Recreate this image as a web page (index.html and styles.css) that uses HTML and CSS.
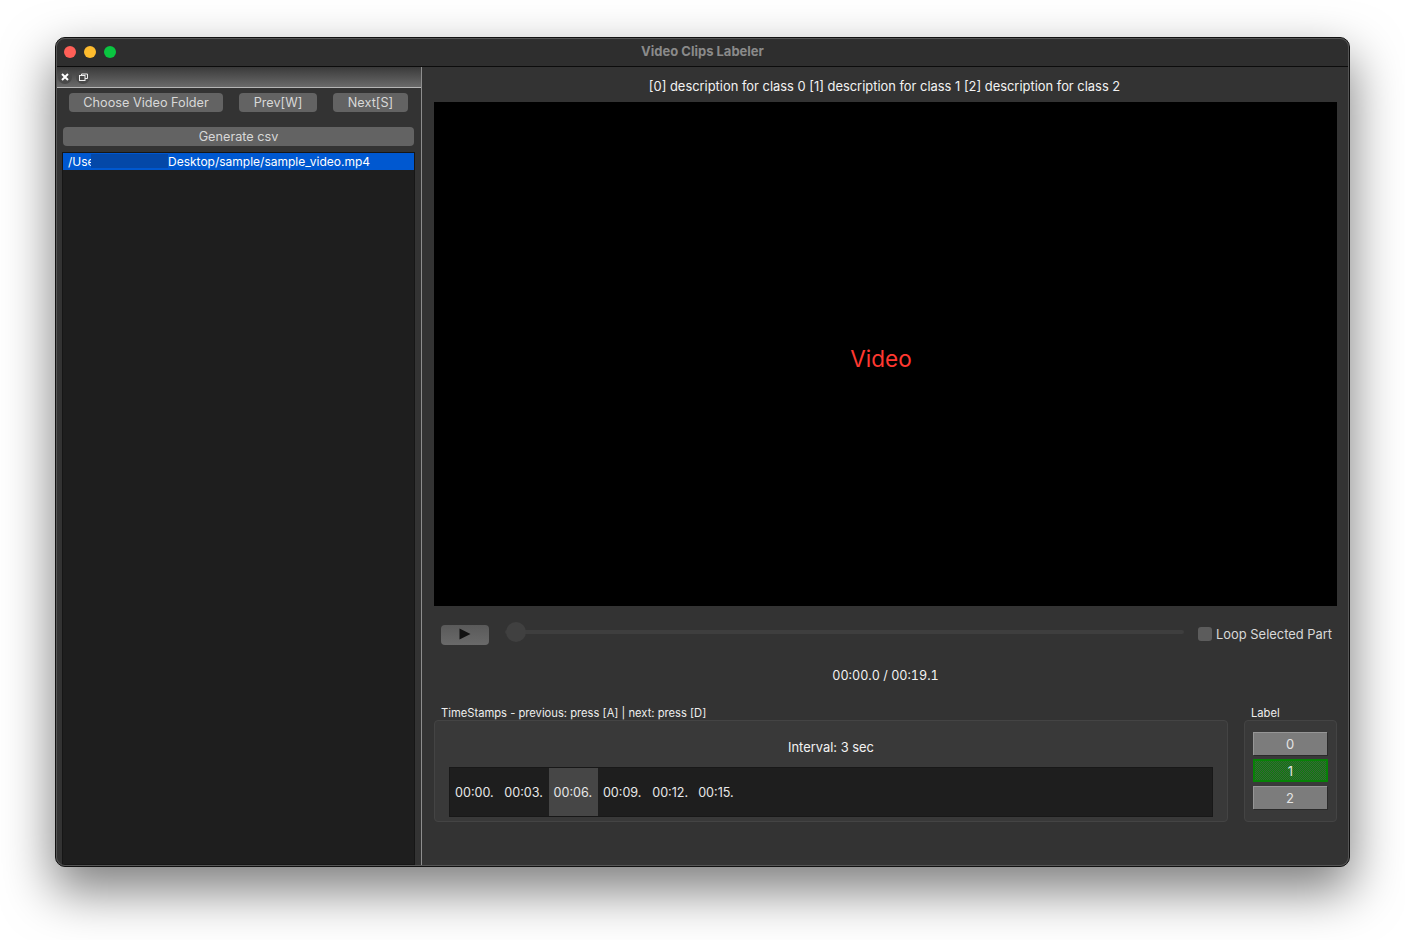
FILE: index.html
```html
<!DOCTYPE html>
<html>
<head>
  <meta charset="UTF-8">
  <title>Video Clips Labeler</title>
  <link rel="stylesheet" href="styles.css">
</head>
<body>
  <div class="window">
    <div class="titlebar">
      <div class="lights">
        <span class="light red"></span>
        <span class="light yellow"></span>
        <span class="light green"></span>
      </div>
      <span class="title">Video Clips Labeler</span>
    </div>
    <div class="content">
      <div class="dock">
        <div class="dock-title">
          <span class="dock-btn">
            <svg width="8" height="8" viewBox="0 0 8 8"><path d="M1 1l6 6M7 1l-6 6" stroke="#fff" stroke-width="2"/></svg>
          </span>
          <span class="dock-btn">
            <svg width="9" height="9" viewBox="0 0 9 9" fill="none" stroke="#eee"><rect x="0.5" y="2.5" width="5.5" height="5"/><path d="M2.5 2.5v-1.5h6v4.5h-2.5"/></svg>
          </span>
        </div>
        <div class="dock-body">
          <div class="nav-row">
            <button class="btn folder">Choose Video Folder</button>
            <button class="btn prev">Prev[W]</button>
            <button class="btn next">Next[S]</button>
          </div>
          <button class="btn csv">Generate csv</button>
          <div class="file-list">
            <div class="file-item selected">
              <span class="path-start">/Use</span>
              <span class="redacted"></span>
              <span>Desktop/sample/sample_video.mp4</span>
            </div>
          </div>
        </div>
      </div>
      <div class="main">
        <div class="description">[0] description for class 0 [1] description for class 1 [2] description for class 2</div>
        <div class="video">Video</div>
        <div class="controls">
          <button class="play">
            <svg width="12" height="12" viewBox="0 0 12 12"><path d="M0.5 0.5L11.5 6L0.5 11.5z" fill="#111"/></svg>
          </button>
          <div class="slider"><span class="handle"></span></div>
          <label class="loop"><span class="checkbox"></span>Loop Selected Part</label>
        </div>
        <div class="time">00:00.0 / 00:19.1</div>
        <div class="groups">
          <div class="group-wrap stamps">
            <div class="group-title">TimeStamps - previous: press [A] | next: press [D]</div>
            <div class="group stamps-box">
              <div class="interval">Interval: 3 sec</div>
              <div class="stamp-list">
                <span class="stamp">00:00.</span>
                <span class="stamp">00:03.</span>
                <span class="stamp current">00:06.</span>
                <span class="stamp">00:09.</span>
                <span class="stamp short">00:12.</span>
                <span class="stamp">00:15.</span>
              </div>
            </div>
          </div>
          <div class="group-wrap labels">
            <div class="group-title">Label</div>
            <div class="group labels-box">
              <button class="label-btn">0</button>
              <button class="label-btn active">1</button>
              <button class="label-btn">2</button>
            </div>
          </div>
        </div>
      </div>
    </div>
  </div>
</body>
</html>
```

FILE: styles.css
```css
html, body {
  height: 100%;
}

body {
  margin: 0;
  padding: 37px 55px 0;
  box-sizing: border-box;
  background-color: #fff;
  font-family: 'Inter', 'Liberation Sans', sans-serif;
  font-size: 12.9px;
  color: #e8e8e8;
  overflow: hidden;
}

button {
  font-family: inherit;
  border: 0;
  padding: 0;
}

.window {
  width: 1295px;
  height: 830px;
  box-sizing: border-box;
  display: flex;
  flex-direction: column;
  position: relative;
  background-color: #333;
  border: 1px solid #111;
  border-radius: 10px;
  box-shadow: 0 22px 50px 2px rgba(0, 0, 0, 0.5);
}

/* light inner edge of the window frame, lies over the content */
.window::after {
  content: '';
  position: absolute;
  inset: 0;
  border-radius: 9px;
  box-shadow: inset 0 0 0 1px #555;
  pointer-events: none;
}

.titlebar {
  height: 26px;
  padding-bottom: 2px;
  flex-shrink: 0;
  display: flex;
  align-items: center;
  justify-content: center;
  position: relative;
  background-color: #2e2e2e;
  border-bottom: 1px solid #0c0c0c;
  border-radius: 9px 9px 0 0;
}

.title {
  font-size: 13px;
  font-weight: 700;
  color: #8a8a8a;
}

.lights {
  position: absolute;
  left: 8px;
  top: 8px;
  display: flex;
  gap: 8px;
}

.light {
  width: 12px;
  height: 12px;
  border-radius: 50%;
}

.light.red { background-color: #ff5f57; }
.light.yellow { background-color: #febc2e; }
.light.green { background-color: #0ac540; }

.content {
  flex-grow: 1;
  display: flex;
  min-height: 0;
}

.dock {
  width: 364px;
  flex-shrink: 0;
  display: flex;
  flex-direction: column;
  border-right: 1px solid #8e8e8e;
  margin-left: 1px;
}

.dock-title {
  height: 20px;
  flex-shrink: 0;
  display: flex;
  align-items: center;
  gap: 4px;
  padding-left: 1px;
  background: linear-gradient(#3a3a3a, #6a6a6a);
  border-bottom: 1px solid #b5b5b5;
}

.dock-btn {
  width: 14px;
  height: 14px;
  display: flex;
  align-items: center;
  justify-content: center;
  border-radius: 50%;
  background-color: #4a4a4a;
}

.dock-body {
  flex-grow: 1;
  display: flex;
  flex-direction: column;
  min-height: 0;
  padding: 5px 6px 2px;
}

.nav-row {
  display: flex;
  padding-left: 6px;
  margin-bottom: 15px;
}

.btn {
  height: 19px;
  background-color: #636363;
  color: #d8d8d8;
  font-size: 12.7px;
  border-radius: 4px;
}

.folder { width: 154px; margin-right: 16px; }
.prev { width: 78px; margin-right: 16px; }
.next { width: 75px; }

.csv {
  width: 351px;
  flex-shrink: 0;
}

.file-list {
  flex-grow: 1;
  width: 351px;
  margin-top: 7px;
  background-color: #1e1e1e;
  box-shadow: 0 0 0 1px #161616;
}

.file-item {
  height: 17px;
  line-height: 17px;
  display: flex;
  padding-left: 5px;
  font-size: 12px;
  color: #fff;
}

.file-item.selected {
  background-color: #0058d0;
}

.path-start {
  width: 23px;
  overflow: hidden;
}

.redacted {
  width: 77px;
  height: 14px;
  margin-top: 1px;
  background-color: #0448a8;
}

.main {
  flex-grow: 1;
  min-width: 0;
  display: flex;
  flex-direction: column;
  padding: 0 12px;
}

.description {
  height: 35px;
  line-height: 40px;
  padding-right: 2px;
  text-align: center;
  color: #f2f2f2;
}

.video {
  height: 504px;
  flex-shrink: 0;
  display: flex;
  align-items: center;
  justify-content: center;
  background-color: #000;
  color: #ff3830;
  font-size: 22.5px;
  padding: 8px 9px 0 0;
  box-sizing: border-box;
}

.controls {
  display: flex;
  align-items: center;
  height: 20px;
  margin-top: 19px;
  padding-left: 7px;
}

.play {
  width: 48px;
  height: 20px;
  display: flex;
  align-items: center;
  justify-content: center;
  padding-bottom: 2px;
  background: linear-gradient(#5a5a5a, #6a6a6a);
  border-radius: 4px;
  margin-right: 16px;
  flex-shrink: 0;
}

.slider {
  flex-grow: 1;
  height: 4px;
  background-color: #3e3e3e;
  border-radius: 2px;
  position: relative;
  margin-top: -6px;
}

.handle {
  position: absolute;
  left: 1px;
  top: -8px;
  width: 20px;
  height: 20px;
  border-radius: 50%;
  background-color: #404040;
}

.loop {
  display: flex;
  align-items: center;
  gap: 4px;
  margin-left: 14px;
  margin-right: 5px;
  margin-top: -2px;
  color: #d8d8d8;
}

.checkbox {
  width: 14px;
  height: 14px;
  border-radius: 3px;
  background-color: #5c5c5c;
}

.time {
  height: 20px;
  line-height: 20px;
  margin-top: 21px;
  text-align: center;
  font-size: 12.6px;
  font-variant-numeric: tabular-nums;
  color: #f2f2f2;
}

.groups {
  display: flex;
  gap: 16px;
  margin-top: 19px;
}

.group-wrap.stamps {
  width: 794px;
}

.group-wrap.labels {
  width: 93px;
}

.group-title {
  height: 15px;
  line-height: 16px;
  padding-left: 7px;
  font-size: 11.2px;
  color: #eee;
}

.group {
  height: 102px;
  box-sizing: border-box;
  background-color: #393939;
  border: 1px solid #444;
  border-radius: 4px;
}

.stamps-box {
  padding: 0 14px;
}

.interval {
  height: 46px;
  line-height: 54px;
  text-align: center;
  color: #f2f2f2;
}

.stamp-list {
  height: 50px;
  box-sizing: border-box;
  display: flex;
  background-color: #1e1e1e;
  border: 1px solid #181818;
}

.stamp {
  display: flex;
  align-items: center;
  box-sizing: border-box;
  min-width: 49.3px;
  padding: 0 5px;
  font-size: 12.6px;
  color: #e8e8e8;
}

.stamp.short {
  min-width: 0;
}

.stamp.current {
  background-color: #464646;
}

.labels-box {
  display: flex;
  flex-direction: column;
  align-items: flex-start;
  gap: 4px;
  padding: 11px 0 0 8px;
}

.label-btn {
  width: 74px;
  height: 23px;
  background-color: #7c7c7c;
  color: #e4e4e4;
  font-size: 13px;
  box-shadow: 1px 1px 0 #2a2a2a, inset 1px 1px 0 #969696;
}

.label-btn.active {
  width: 75px;
  background: repeating-conic-gradient(#0c800c 0 25%, #3a5f3a 0 50%) 0 0 / 2px 2px;
  border: 2px solid #068206;
  box-sizing: border-box;
  box-shadow: none;
}
```
